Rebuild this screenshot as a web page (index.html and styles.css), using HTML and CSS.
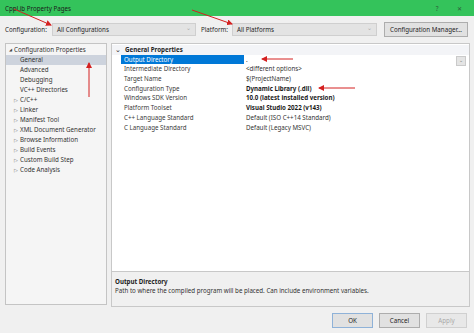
FILE: index.html
```html
<!DOCTYPE html>
<html lang="en">
<head>
<meta charset="UTF-8" />
<title>CppLib Property Pages</title>
<link rel="stylesheet" href="styles.css">
</head>
<body>

<div class="window">
  <div class="titlebar">
    <span class="title">CppLib Property Pages</span>
    <span class="ctrl help">?</span>
    <span class="ctrl close">✕</span>
  </div>

  <div class="toolbar">
    <span class="label cfg">Configuration:</span>
    <div class="combo config"><span>All Configurations</span><span class="caret">⌄</span></div>
    <span class="label plat">Platform:</span>
    <div class="combo platform"><span>All Platforms</span><span class="caret">⌄</span></div>
    <button class="btn mgr">Configuration Manager...</button>
  </div>

  <div class="main">
    <div class="tree">
      <div class="node root"><span class="tw">◢</span>Configuration Properties</div>
      <div class="node leaf selected">General</div>
      <div class="node leaf">Advanced</div>
      <div class="node leaf">Debugging</div>
      <div class="node leaf">VC++ Directories</div>
      <div class="node"><span class="tw">▷</span>C/C++</div>
      <div class="node"><span class="tw">▷</span>Linker</div>
      <div class="node"><span class="tw">▷</span>Manifest Tool</div>
      <div class="node"><span class="tw">▷</span>XML Document Generator</div>
      <div class="node"><span class="tw">▷</span>Browse Information</div>
      <div class="node"><span class="tw">▷</span>Build Events</div>
      <div class="node"><span class="tw">▷</span>Custom Build Step</div>
      <div class="node"><span class="tw">▷</span>Code Analysis</div>
    </div>

    <div class="right">
      <div class="grid">
        <div class="group"><span class="chev">⌄</span>General Properties</div>
        <div class="row active">
          <span class="name">Output Directory</span>
          <span class="value">.</span>
          <span class="drop">⌄</span>
        </div>
        <div class="row"><span class="name">Intermediate Directory</span><span class="value">&lt;different options&gt;</span></div>
        <div class="row"><span class="name">Target Name</span><span class="value">$(ProjectName)</span></div>
        <div class="row"><span class="name">Configuration Type</span><span class="value bold">Dynamic Library (.dll)</span></div>
        <div class="row"><span class="name">Windows SDK Version</span><span class="value bold">10.0 (latest installed version)</span></div>
        <div class="row"><span class="name">Platform Toolset</span><span class="value bold">Visual Studio 2022 (v143)</span></div>
        <div class="row"><span class="name">C++ Language Standard</span><span class="value">Default (ISO C++14 Standard)</span></div>
        <div class="row"><span class="name">C Language Standard</span><span class="value">Default (Legacy MSVC)</span></div>
      </div>
      <div class="desc">
        <div class="desc-title">Output Directory</div>
        <div class="desc-text">Path to where the compiled program will be placed. Can include environment variables.</div>
      </div>
    </div>
  </div>

  <div class="footer">
    <button class="btn ok">OK</button>
    <button class="btn">Cancel</button>
    <button class="btn" disabled>Apply</button>
  </div>

  <!-- red annotation arrows drawn over the dialog -->
  <svg class="marks" width="474" height="333" viewBox="0 0 474 333">
    <defs>
      <marker id="head" markerWidth="6" markerHeight="6" refX="5" refY="3" orient="auto" markerUnits="userSpaceOnUse">
        <path d="M0,0 L6,3 L0,6 z" fill="#d42020" />
      </marker>
    </defs>
    <line x1="14" y1="9" x2="51" y2="25" marker-end="url(#head)" />
    <line x1="192" y1="10" x2="232" y2="24" marker-end="url(#head)" />
    <line x1="89" y1="97" x2="89" y2="63" marker-end="url(#head)" />
    <line x1="293" y1="59" x2="262" y2="59" marker-end="url(#head)" />
    <line x1="355" y1="88" x2="319" y2="88" marker-end="url(#head)" />
  </svg>
</div>

</body>
</html>
```

FILE: styles.css
```css
body {
  margin: 0;
  font-family: "Noto Sans", "Open Sans", sans-serif;
  font-size: 6.2px;
  color: #1e1e1e;
  background: #f0f0f0;
}

.window {
  position: relative;
  width: 474px;
  height: 333px;
  background: #f0f0f0;
  display: flex;
  flex-direction: column;
  overflow: hidden;
}

.titlebar {
  height: 16px;
  background: #34c35b;
  display: flex;
  align-items: center;
  padding-left: 5px;
  color: #1a1a1a;
}
.titlebar .title { flex: 1; }
.ctrl {
  width: 22px;
  text-align: center;
  color: #2d5a3a;
}
.ctrl.close { margin-right: 4px; }

.toolbar {
  display: flex;
  align-items: center;
  height: 15px;
  margin-top: 6px;
  padding-left: 5px;
  white-space: nowrap;
}
.label.cfg { width: 47px; }
.label.plat { width: 31px; margin-left: 5px; }
.combo {
  height: 13px;
  background: #e3e3e3;
  border: 1px solid #cfcfcf;
  display: flex;
  align-items: center;
  justify-content: space-between;
  padding: 0 4px;
  box-sizing: border-box;
}
.combo.config { width: 144px; }
.combo.platform { width: 145px; margin-right: 7px; }
.caret { color: #aaa; font-size: 6px; line-height: 6px; margin-top: -3px; }

.btn {
  font-family: inherit;
  font-size: 6.2px;
  height: 15px;
  background: #e1e1e1;
  border: 1px solid #adadad;
  color: #1e1e1e;
  padding: 0;
  white-space: nowrap;
}
.btn.mgr { width: 84px; }
.btn.ok { border-color: #8fb2d8; }
.btn:disabled { color: #a8a8a8; border-color: #d0d0d0; background: #e8e8e8; }

.main {
  display: flex;
  gap: 4px;
  height: 264px;
  margin-top: 6px;
  padding-left: 5px;
}

.tree {
  width: 102px;
  height: 262px;
  background: #f5f5f5;
  border: 1px solid #c4c4c4;
  box-sizing: border-box;
  padding-top: 1px;
  color: #333;
}
.node {
  height: 10px;
  line-height: 10px;
  padding-left: 8px;
  white-space: nowrap;
}
.node .tw {
  display: inline-block;
  width: 6px;
  font-size: 4.5px;
  color: #6b6b6b;
  vertical-align: top;
}
.node.root { padding-left: 3px; }
.node.root .tw { font-size: 3.5px; color: #444; width: 5px; }
.node.leaf { padding-left: 14px; }
.node.selected { background: #cdd3dd; }

.right {
  width: 359px;
  display: flex;
  flex-direction: column;
}

.grid {
  height: 229px;
  background: #fff;
  border: 1px solid #c8c8c8;
  box-sizing: border-box;
  padding-top: 1px;
}
.group {
  height: 9.7px;
  line-height: 9.7px;
  font-weight: 700;
  background: #f3f4f7;
  padding-left: 3px;
}
.chev {
  display: inline-block;
  width: 10px;
  font-weight: 400;
  font-size: 7px;
}
.row {
  display: flex;
  height: 9.7px;
  line-height: 9.7px;
  padding-left: 9px;
  color: #333;
}
.name {
  width: 123px;
  padding-left: 3px;
  box-sizing: border-box;
  color: #3a3a3a;
  white-space: nowrap;
}
.value { flex: 1; padding-left: 2px; white-space: nowrap; }
.bold { font-weight: 700; color: #1a1a1a; }
.row.active .name { background: #0078d7; color: #fff; }
.drop {
  width: 8px;
  height: 8px;
  line-height: 6px;
  margin: 1px 3px 0 0;
  background: #e4e4e4;
  border: 1px solid #cacaca;
  text-align: center;
  font-size: 5px;
  color: #777;
}

.desc {
  height: 35px;
  border: 1px solid #c8c8c8;
  border-top: none;
  box-sizing: border-box;
  padding: 5px 3px 0;
  background: #f0f0f0;
}
.desc-title { font-weight: 700; line-height: 9px; }
.desc-text { line-height: 9px; color: #333; }

.footer {
  display: flex;
  justify-content: flex-end;
  gap: 6px;
  margin-top: 6px;
  padding-right: 7px;
}
.footer .btn { width: 41px; }

.marks {
  position: absolute;
  left: 0;
  top: 0;
  pointer-events: none;
}
.marks line {
  stroke: #d42020;
  stroke-width: 1;
}
```
